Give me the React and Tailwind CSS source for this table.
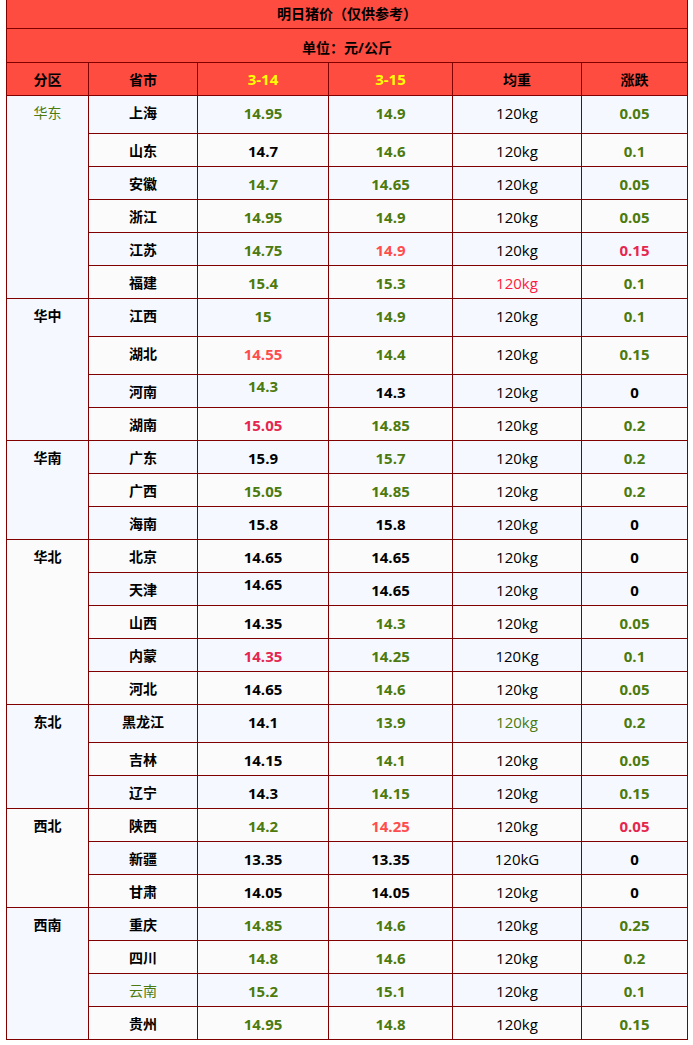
import React from "react";

const COLORS = {
  g: "text-[#4c7a0e] font-bold",
  k: "text-black font-bold",
  r: "text-[#ff4d4d] font-bold",
  c: "text-[#e5264f] font-bold",
};

const WEIGHT_COLORS = {
  k: "text-black",
  r: "text-[#ff1a40]",
  g: "text-[#4c7a0e]",
};

// p, 3-14, 3-15, 涨跌 — each value "text color"
function r(p, a, b, d, opts = {}) {
  const [av, ac] = a.split(" ");
  const [bv, bc] = b.split(" ");
  const [dv, dc] = d.split(" ");
  return {
    p, av, ac, bv, bc, dv, dc,
    w: opts.w || "120kg",
    wc: opts.wc || "k",
    h: opts.h || 33,
    raise: opts.raise || false,
    pGreen: opts.pGreen || false,
  };
}

const GROUPS = [
  {
    region: "华东",
    green: true,
    rows: [
      r("上海", "14.95 g", "14.9 g", "0.05 g", { h: 38 }),
      r("山东", "14.7 k", "14.6 g", "0.1 g"),
      r("安徽", "14.7 g", "14.65 g", "0.05 g"),
      r("浙江", "14.95 g", "14.9 g", "0.05 g"),
      r("江苏", "14.75 g", "14.9 r", "0.15 c"),
      r("福建", "15.4 g", "15.3 g", "0.1 g", { wc: "r" }),
    ],
  },
  {
    region: "华中",
    rows: [
      r("江西", "15 g", "14.9 g", "0.1 g", { h: 38 }),
      r("湖北", "14.55 r", "14.4 g", "0.15 g", { h: 38 }),
      r("河南", "14.3 g", "14.3 k", "0 k", { raise: true }),
      r("湖南", "15.05 c", "14.85 g", "0.2 g"),
    ],
  },
  {
    region: "华南",
    rows: [
      r("广东", "15.9 k", "15.7 g", "0.2 g"),
      r("广西", "15.05 g", "14.85 g", "0.2 g"),
      r("海南", "15.8 k", "15.8 k", "0 k"),
    ],
  },
  {
    region: "华北",
    rows: [
      r("北京", "14.65 k", "14.65 k", "0 k"),
      r("天津", "14.65 k", "14.65 k", "0 k", { raise: true }),
      r("山西", "14.35 k", "14.3 g", "0.05 g"),
      r("内蒙", "14.35 c", "14.25 g", "0.1 g", { w: "120Kg" }),
      r("河北", "14.65 k", "14.6 g", "0.05 g"),
    ],
  },
  {
    region: "东北",
    rows: [
      r("黑龙江", "14.1 k", "13.9 g", "0.2 g", { h: 38, wc: "g" }),
      r("吉林", "14.15 k", "14.1 g", "0.05 g"),
      r("辽宁", "14.3 k", "14.15 g", "0.15 g"),
    ],
  },
  {
    region: "西北",
    rows: [
      r("陕西", "14.2 g", "14.25 r", "0.05 c"),
      r("新疆", "13.35 k", "13.35 k", "0 k", { w: "120kG" }),
      r("甘肃", "14.05 k", "14.05 k", "0 k"),
    ],
  },
  {
    region: "西南",
    rows: [
      r("重庆", "14.85 g", "14.6 g", "0.25 g"),
      r("四川", "14.8 g", "14.6 g", "0.2 g"),
      r("云南", "15.2 g", "15.1 g", "0.1 g", { pGreen: true }),
      r("贵州", "14.95 g", "14.8 g", "0.15 g"),
    ],
  },
];

const cell = "border border-[#800000] text-center align-top leading-[20px]";
const num = "text-[15px] font-['Open_Sans',sans-serif]";

export default function App() {
  let idx = 0;
  const body = [];
  GROUPS.forEach((g) => {
    g.rows.forEach((row, i) => {
      const bg = idx % 2 === 0 ? "bg-[#f5f9ff]" : "bg-[#fbfbfb]";
      const pt = row.raise ? "pt-[1px]" : "pt-[7px]";
      body.push(
        <tr key={row.p} className={bg} style={{ height: row.h }}>
          {i === 0 && (
            <td
              rowSpan={g.rows.length}
              className={`${cell} ${bg} pt-[7px] text-[14px] ${g.green ? "text-[#4c7a0e] font-normal" : "text-black font-bold"}`}
            >
              {g.region}
            </td>
          )}
          <td className={`${cell} pt-[7px] text-[14px] ${row.pGreen ? "text-[#4c7a0e] font-normal" : "text-black font-bold"}`}>
            {row.p}
          </td>
          <td className={`${cell} ${pt} ${num} ${COLORS[row.ac]}`}>{row.av}</td>
          <td className={`${cell} pt-[7px] ${num} ${COLORS[row.bc]}`}>{row.bv}</td>
          <td className={`${cell} pt-[7px] ${num} ${WEIGHT_COLORS[row.wc]}`}>{row.w}</td>
          <td className={`${cell} pt-[7px] ${num} ${COLORS[row.dc]}`}>{row.dv}</td>
        </tr>
      );
      idx++;
    });
  });

  return (
    <div className="w-[693px] min-h-[1045px] bg-white pl-[6px] font-['Open_Sans','Noto_Sans_CJK_SC',sans-serif]">
      <table className="table-fixed border-collapse w-[681px]">
        <colgroup>
          <col className="w-[82px]" />
          <col className="w-[109px]" />
          <col className="w-[131px]" />
          <col className="w-[124px]" />
          <col className="w-[129px]" />
          <col className="w-[106px]" />
        </colgroup>
        <thead>
          <tr className="bg-[#ff4c40] h-[28px]">
            <th colSpan={6} className="border border-t-0 border-[#800000] text-[14px] font-bold text-black align-middle">
              明日猪价（仅供参考）
            </th>
          </tr>
          <tr className="bg-[#ff4c40] h-[34px]">
            <th colSpan={6} className="border border-[#800000] text-[14px] font-bold text-black align-middle pt-[5px]">
              单位：元/公斤
            </th>
          </tr>
          <tr className="bg-[#ff4c40] h-[33px]">
            <th className="border border-[#800000] text-[14px] font-bold text-black pt-[1px]">分区</th>
            <th className="border border-[#800000] text-[14px] font-bold text-black pt-[1px]">省市</th>
            <th className="border border-[#800000] text-[15px] font-bold text-[#ffff00] pt-[1px]">3-14</th>
            <th className="border border-[#800000] text-[15px] font-bold text-[#ffff00] pt-[1px]">3-15</th>
            <th className="border border-[#800000] text-[14px] font-bold text-black pt-[1px]">均重</th>
            <th className="border border-[#800000] text-[14px] font-bold text-black pt-[1px]">涨跌</th>
          </tr>
        </thead>
        <tbody>{body}</tbody>
      </table>
    </div>
  );
}
